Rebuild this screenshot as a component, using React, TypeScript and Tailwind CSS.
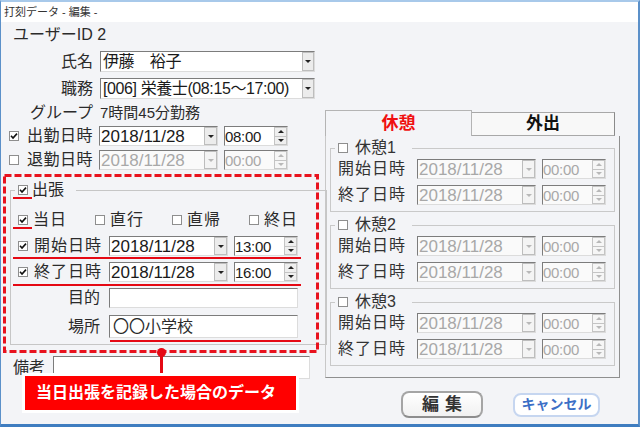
import React from "react";

const sunken =
  "border border-t-[#7c7c7c] border-l-[#7c7c7c] border-b-[#dcdcdc] border-r-[#dcdcdc]";

function Check({ checked = false }: { checked?: boolean }) {
  return (
    <div className="flex h-[10px] w-[10px] shrink-0 items-center justify-center border border-[#8e8e8e] bg-white">
      {checked && (
        <svg width="8" height="8" viewBox="0 0 8 8">
          <path d="M1 3.8 L3 6 L7 1.6" fill="none" stroke="#111" strokeWidth="1.6" />
        </svg>
      )}
    </div>
  );
}

function Arrow({ up = false, disabled = false, size = 4 }: { up?: boolean; disabled?: boolean; size?: number }) {
  const c = disabled ? "#b8b8b8" : "#222";
  return (
    <svg width={size * 2} height={size} viewBox="0 0 8 4">
      <path d={up ? "M0 4 L4 0 L8 4 Z" : "M0 0 L8 0 L4 4 Z"} fill={c} />
    </svg>
  );
}

function DateBox({ value = "2018/11/28", disabled = false }: { value?: string; disabled?: boolean }) {
  return (
    <div className={`flex h-[20px] w-[119px] shrink-0 ${sunken} ${disabled ? "bg-[#fafafa]" : "bg-white"}`}>
      <span
        className={`flex-1 pl-[1px] text-[17px] leading-[19px] ${disabled ? "text-[#a8a8a8]" : "text-[#1a1a1a]"}`}
      >
        {value}
      </span>
      <div
        className={`flex w-[13px] items-center justify-center border border-[#bdbdbd] ${
          disabled ? "bg-[#f4f4f4]" : "bg-[#ececec]"
        }`}
      >
        <Arrow disabled={disabled} size={3} />
      </div>
    </div>
  );
}

function TimeBox({ value = "00:00", disabled = false }: { value?: string; disabled?: boolean }) {
  return (
    <div className={`flex h-[20px] w-[64px] shrink-0 ${sunken} ${disabled ? "bg-[#fafafa]" : "bg-white"}`}>
      <span
        className={`flex-1 text-[15px] leading-[19px] tracking-[-0.3px] ${
          disabled ? "text-[#a8a8a8]" : "text-[#1a1a1a]"
        }`}
      >
        {value}
      </span>
      <div className="flex w-[13px] flex-col">
        <div
          className={`flex flex-1 items-center justify-center border border-[#c4c4c4] ${
            disabled ? "bg-[#f6f6f6]" : "bg-[#efefef]"
          }`}
        >
          <Arrow up disabled={disabled} size={3} />
        </div>
        <div
          className={`flex flex-1 items-center justify-center border border-t-0 border-[#c4c4c4] ${
            disabled ? "bg-[#f6f6f6]" : "bg-[#efefef]"
          }`}
        >
          <Arrow disabled={disabled} size={3} />
        </div>
      </div>
    </div>
  );
}

function Select({ text }: { text: string }) {
  return (
    <div className={`flex h-[21px] w-[215px] bg-white ${sunken}`}>
      <span className="flex-1 whitespace-nowrap pl-[2px] text-[16px] leading-[19px] tracking-[-0.4px] text-[#1a1a1a]">
        {text}
      </span>
      <div className="flex w-[12px] shrink-0 items-center justify-center border border-[#bdbdbd] bg-[#ececec]">
        <Arrow size={3} />
      </div>
    </div>
  );
}

function BreakGroup({ n, first = false }: { n: number; first?: boolean }) {
  return (
    <fieldset
      className={`${first ? "mt-[2px]" : "mt-[3px]"} ml-[4px] w-[285px] border border-[#c9c9c9] pb-[6px]`}
    >
      <legend className="ml-[4px] flex h-[20px] items-center pl-[3px] pr-[16px]">
        <Check />
        <span className="ml-[7px] text-[16px] text-[#333]">休憩{n}</span>
      </legend>
      {["開始日時", "終了日時"].map((l, i) => (
        <div key={l} className={`flex h-[20px] items-center ${i === 0 ? "mt-[1px]" : "mt-[6px]"}`}>
          <span className="ml-[7px] w-[79px] text-[16px] tracking-[1px] text-[#333]">{l}</span>
          <DateBox disabled />
          <div className="ml-[6px]">
            <TimeBox disabled />
          </div>
        </div>
      ))}
    </fieldset>
  );
}

export default function App() {
  const red = "bg-[#e50914]";
  return (
    <div className="flex h-[427px] w-[640px] flex-col border-t-2 border-r-2 border-b-[3px] border-l border-t-[#a8c9ea] border-r-[#5b90c9] border-b-[#3f7dc0] border-l-[#5b90c9] font-['Liberation_Sans','Noto_Sans_CJK_JP',sans-serif] text-[#2b2b2b]">
      <div className="flex h-[20px] items-center bg-white pl-[3px] text-[11px] text-[#333]">
        打刻データ - 編集 -
      </div>
      <div className="relative flex flex-1 bg-[#f3f4f7]">
        {/* left column */}
        <div className="flex w-[320px] flex-col">
          <div className="mt-[3px] flex h-[20px] items-center pl-[12px] text-[16px]">ユーザーID 2</div>
          <div className="mt-[6px] flex h-[21px] items-center">
            <span className="w-[99px] pr-[7px] text-right text-[16px]">氏名</span>
            <Select text="伊藤　裕子" />
          </div>
          <div className="mt-[6px] flex h-[21px] items-center">
            <span className="w-[99px] pr-[7px] text-right text-[16px]">職務</span>
            <Select text="[006] 栄養士(08:15〜17:00)" />
          </div>
          <div className="mt-[4px] flex h-[20px] items-center">
            <span className="w-[99px] pr-[7px] text-right text-[16px]">グループ</span>
            <span className="text-[15px]">7時間45分勤務</span>
          </div>
          <div className="mt-[3px] flex h-[20px] items-center">
            <div className="ml-[8px]">
              <Check checked />
            </div>
            <span className="ml-[8px] w-[72px] text-[16px] tracking-[0.5px]">出勤日時</span>
            <DateBox />
            <div className="ml-[6px]">
              <TimeBox value="08:00" />
            </div>
          </div>
          <div className="mt-[4px] flex h-[20px] items-center">
            <div className="ml-[8px]">
              <Check />
            </div>
            <span className="ml-[8px] w-[72px] text-[16px] tracking-[0.5px]">退勤日時</span>
            <DateBox disabled />
            <div className="ml-[6px]">
              <TimeBox disabled />
            </div>
          </div>

          {/* highlighted business-trip block */}
          <div className="relative ml-[2px] mt-[4px] h-[179px] w-[316px] p-[3px]">
            <svg className="absolute inset-0" width="316" height="179">
              <rect
                x="1.5"
                y="1.5"
                width="313"
                height="176"
                fill="none"
                stroke="#e8121e"
                strokeWidth="3"
                strokeDasharray="7 3"
              />
            </svg>
            <fieldset className="ml-[4px] mt-[3px] w-[303px] border border-[#c6c6c6] pb-[6px]">
              <legend className="ml-[4px] flex h-[20px] items-center pl-[3px] pr-[12px]">
                <Check checked />
                <span className="ml-[4px] text-[16px]">出張</span>
              </legend>
              <div className="mt-[10px] flex h-[20px] items-center pl-[7px]">
                {[
                  ["当日", true],
                  ["直行", false],
                  ["直帰", false],
                  ["終日", false],
                ].map(([l, c]) => (
                  <div key={l as string} className="flex w-[77px] items-center">
                    <Check checked={c as boolean} />
                    <span className="ml-[5px] text-[16px] tracking-[1px]">{l}</span>
                  </div>
                ))}
              </div>
              {[
                ["開始日時", "13:00"],
                ["終了日時", "16:00"],
              ].map(([l, t]) => (
                <div key={l} className="mt-[6px] flex h-[20px] items-center pl-[7px]">
                  <Check checked />
                  <span className="ml-[6px] w-[75px] text-[16px] tracking-[1px]">{l}</span>
                  <DateBox />
                  <div className="ml-[6px]">
                    <TimeBox value={t} />
                  </div>
                </div>
              ))}
              <div className="mt-[6px] flex h-[20px] items-center">
                <span className="w-[90px] pr-[1px] text-right text-[16px]">目的</span>
                <div className={`ml-[8px] h-[20px] w-[189px] bg-white ${sunken}`} />
              </div>
              <div className="mt-[7px] flex h-[23px] items-center">
                <span className="w-[90px] pr-[1px] text-right text-[16px]">場所</span>
                <div
                  className={`ml-[8px] flex h-[23px] w-[189px] items-center bg-white pl-[3px] text-[16px] ${sunken}`}
                >
                  〇〇小学校
                </div>
              </div>
            </fieldset>
          </div>

          <div className="mt-[3px] flex h-[23px] items-center">
            <span className="ml-[12px] w-[40px] text-[16px]">備考</span>
            <div className={`h-[23px] w-[257px] bg-white ${sunken}`} />
          </div>
        </div>

        {/* right column */}
        <div className="flex flex-col pl-[4px]">
          <div className="mt-[88px] flex h-[26px] items-end">
            <div className="flex h-[26px] w-[147px] items-center justify-center border border-b-0 border-[#b4b4b4] bg-[#f3f4f7] text-[17px] font-bold text-[#f01010]">
              休憩
            </div>
            <div className="flex h-[24px] w-[143px] items-center justify-center border border-l-0 border-[#a8a8a8] border-r-[#8a8a8a] bg-[#f8f8f8] text-[17px] font-bold text-[#111]">
              外出
            </div>
          </div>
          <div className="flex h-[242px] w-[295px] flex-col border border-t-0 border-l-[#c8c8c8] border-b-[#8f8f8f] border-r-[#8f8f8f]">
            <BreakGroup n={1} first />
            <BreakGroup n={2} />
            <BreakGroup n={3} />
          </div>
          <div className="mt-[13px] flex items-center">
            <div className="ml-[76px] flex h-[27px] w-[82px] items-center justify-center rounded-[8px] border-2 border-[#a5a5a5] border-b-[#8d8d8d] bg-gradient-to-b from-white to-[#f1f1f1] text-[17px] font-bold tracking-[6px] text-[#333]">
              <span className="ml-[6px]">編集</span>
            </div>
            <div className="ml-[30px] flex h-[24px] w-[87px] items-center justify-center rounded-[8px] border-2 border-[#c6d6f0] bg-white text-[14px] font-bold text-[#3c6fc6]">
              キャンセル
            </div>
          </div>
        </div>

        {/* annotation overlays */}
        <div className={`absolute left-[12px] top-[175px] h-[2px] w-[19px] ${red}`} />
        <div className={`absolute left-[12px] top-[205px] h-[2px] w-[19px] ${red}`} />
        <div className={`absolute left-[12px] top-[235px] h-[2px] w-[288px] ${red}`} />
        <div className={`absolute left-[12px] top-[262px] h-[2px] w-[288px] ${red}`} />
        <div className={`absolute left-[109px] top-[318px] h-[2px] w-[191px] ${red}`} />
        <div className="absolute left-[156px] top-[326px] h-[9px] w-[9px] rounded-full bg-[#e50914]" />
        <div className="absolute left-[159px] top-[332px] h-[20px] w-[3px] bg-[#e50914]" />
        <div className="absolute left-[21px] top-[351px] flex h-[40px] w-[277px] items-center border-[3px] border-white bg-[#ff0000] pl-[11px] text-[16px] font-bold text-white">
          当日出張を記録した場合のデータ
        </div>
      </div>
    </div>
  );
}
